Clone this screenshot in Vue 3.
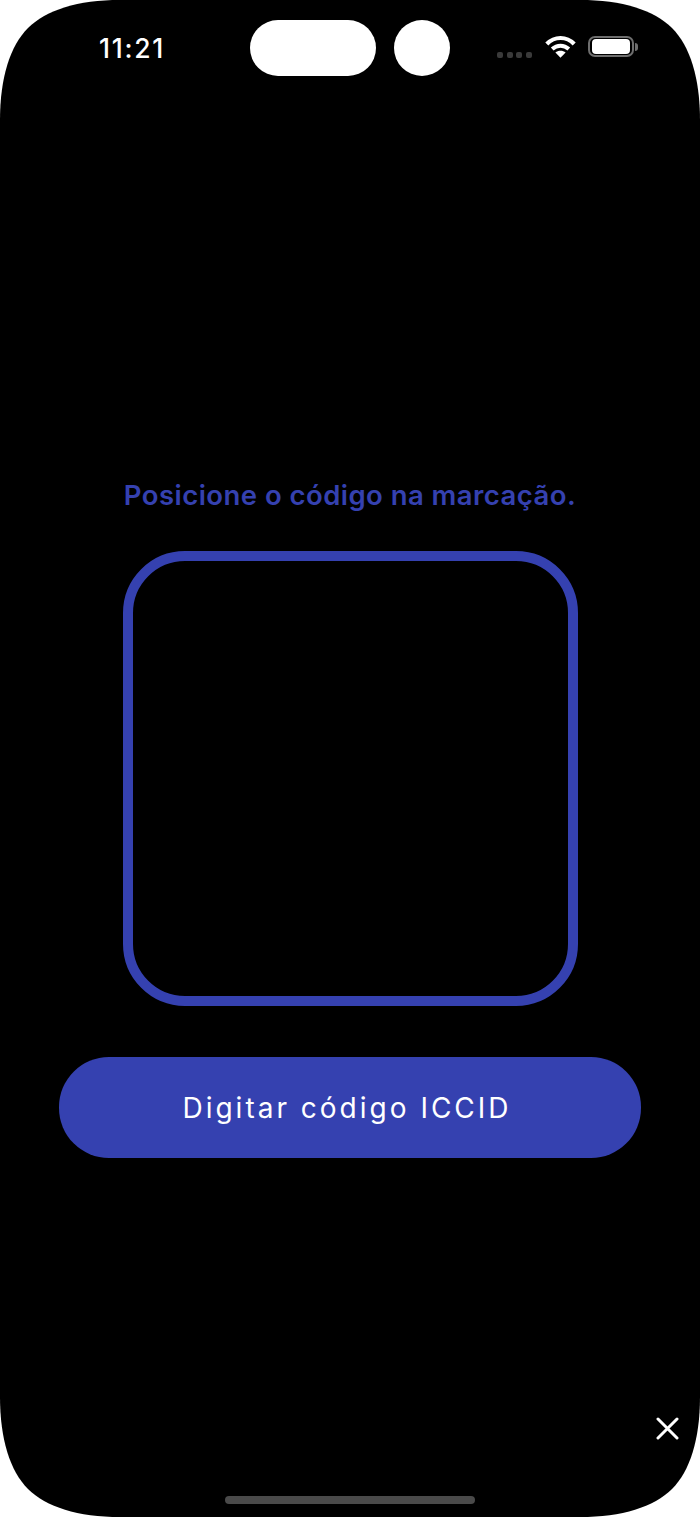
<template>
  <div class="screen">
    <!-- Status bar -->
    <div class="status-bar">
      <span class="time">11:21</span>
      <div class="island">
        <div class="pill"></div>
        <div class="camera"></div>
      </div>
      <div class="signal">
        <span v-for="n in 4" :key="n" class="dot"></span>
      </div>
      <svg class="wifi" width="31" height="23" viewBox="0 0 31 23">
        <path d="M1.8 9 C9.5 1 21.5 1 29.2 9" fill="none" stroke="#fff" stroke-width="4.2" />
        <path d="M7.2 14 C12 9.6 19 9.6 23.8 14" fill="none" stroke="#fff" stroke-width="4" />
        <path d="M10.4 17.6 C13.2 15.2 17.8 15.2 20.6 17.6 L15.5 22.8 Z" fill="#fff" />
      </svg>
      <div class="battery">
        <div class="battery-body"><div class="battery-level"></div></div>
        <div class="battery-nub"></div>
      </div>
    </div>

    <!-- Scanner -->
    <main class="content">
      <h1 class="title">Posicione o código na marcação.</h1>
      <div class="frame"></div>
      <button class="manual-btn">Digitar código ICCID</button>
    </main>

    <!-- Footer -->
    <footer class="bottom">
      <div class="close-row">
        <svg class="close" width="24" height="24" viewBox="0 0 24 24">
          <path d="M2 2 L21 21 M21 2 L2 21" fill="none" stroke="#fff" stroke-width="3" stroke-linecap="round" />
        </svg>
      </div>
      <div class="home-bar"></div>
    </footer>
  </div>
</template>

<script setup>
</script>

<style scoped>
.screen {
  width: 700px;
  height: 1517px;
  background: #000;
  /* device outline, tighter than a plain border-radius */
  clip-path: path("M0 120 C0 78 10 46 28 28 C46 10 78 0 120 0 H580 C622 0 654 10 672 28 C690 46 700 78 700 120 V1397 C700 1439 690 1471 672 1489 C654 1507 622 1517 580 1517 H120 C78 1517 46 1507 28 1489 C10 1471 0 1439 0 1397 Z");
  display: flex;
  flex-direction: column;
  overflow: hidden;
}

.status-bar {
  display: flex;
  align-items: flex-start;
  padding: 20px 0 0 99px;
  height: 76px;
  box-sizing: border-box;
  flex-shrink: 0;
}

.time {
  width: 151px;
  margin-top: 10px;
  color: #fff;
  font-family: Inter, "Liberation Sans", sans-serif;
  font-size: 26.5px;
  font-weight: 500;
  line-height: 36px;
  letter-spacing: 1.7px;
}

.island {
  display: flex;
  gap: 18px;
}

.pill {
  width: 126px;
  height: 56px;
  background: #fff;
  border-radius: 28px;
}

.camera {
  width: 56px;
  height: 56px;
  background: #fff;
  border-radius: 50%;
}

.signal {
  display: flex;
  gap: 3.5px;
  margin: 32px 0 0 47px;
}

.dot {
  width: 6px;
  height: 6px;
  background: #3a3a3a;
  border-radius: 2px;
}

.wifi {
  margin: 15px 0 0 13px;
}

.battery {
  display: flex;
  align-items: center;
  margin: 16px 0 0 12px;
}

.battery-body {
  width: 46px;
  height: 21px;
  box-sizing: border-box;
  border: 2px solid #6e6e6e;
  border-radius: 7px;
  padding: 1px 2px;
}

.battery-level {
  width: 100%;
  height: 100%;
  background: #fff;
  border-radius: 4px;
}

.battery-nub {
  width: 3px;
  height: 8px;
  margin-left: 1px;
  background: #6e6e6e;
  border-radius: 0 3px 3px 0;
}

.content {
  display: flex;
  flex-direction: column;
  align-items: center;
  padding-top: 402px;
}

.title {
  margin: 0;
  color: #3541b0;
  font-family: Inter, "Liberation Sans", sans-serif;
  font-size: 27.5px;
  font-weight: 600;
  line-height: 34px;
  letter-spacing: 0.45px;
  white-space: nowrap;
}

.frame {
  width: 455px;
  height: 455px;
  margin-top: 39px;
  box-sizing: border-box;
  border: 10px solid #3541b0;
  border-radius: 62px;
}

.manual-btn {
  width: 582px;
  height: 101px;
  margin-top: 51px;
  padding: 0 6px 0 0;
  border: none;
  border-radius: 50px;
  background: #3541b0;
  color: #fff;
  font-family: Inter, "Liberation Sans", sans-serif;
  font-size: 28px;
  font-weight: 400;
  letter-spacing: 3px;
}

.bottom {
  margin-top: auto;
  display: flex;
  flex-direction: column;
}

.close-row {
  display: flex;
  justify-content: flex-end;
  padding-right: 20px;
}

.home-bar {
  width: 250px;
  height: 8px;
  margin: 55px auto 13px;
  background: #4a4a4a;
  border-radius: 4px;
}
</style>

<style>
html,
body {
  margin: 0;
  background: #fff;
}
</style>
